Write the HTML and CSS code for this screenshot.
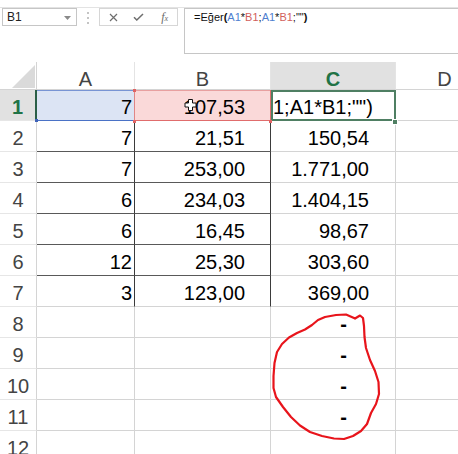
FILE: index.html
```html
<!DOCTYPE html>
<html lang="tr">
<head>
<meta charset="utf-8">
<title>Excel</title>
<link rel="stylesheet" href="styles.css">
</head>
<body>
<div class="app">
  <div class="toolbar">
    <div class="namebox">
      <span class="nb-text">B1</span>
      <svg class="nb-arrow" width="7" height="4" viewBox="0 0 7 4"><path d="M0 0H7L3.5 4Z" fill="#8a8a8a"/></svg>
    </div>
    <div class="dots"><i></i><i></i><i></i></div>
    <div class="btns">
      <span class="btn"><svg width="9" height="9" viewBox="0 0 9 9"><path d="M1 1L8 8M8 1L1 8" stroke="#6e6e6e" stroke-width="1.2" fill="none"/></svg></span>
      <span class="btn"><svg width="11" height="8" viewBox="0 0 11 8"><path d="M1 4.2L3.8 7L10 1" stroke="#6e6e6e" stroke-width="1.5" fill="none"/></svg></span>
      <span class="btn fx"><i>f</i><span class="fx-x">x</span></span>
    </div>
    <div class="fbox">=Eğer<b>(</b><span class="rb">A1</span>*<span class="rr">B1</span>;<span class="rb">A1</span>*<span class="rr">B1</span>;""<b>)</b></div>
  </div>

  <div class="sheet">
    <div class="cell corner"><span class="tri"></span></div>
    <div class="cell ch">A</div>
    <div class="cell ch">B</div>
    <div class="cell ch selh">C</div>
    <div class="cell ch">D</div>

    <div class="cell rh selh">1</div>
    <div class="cell na a1">7</div>
    <div class="cell nb b1">107,53</div>
    <div class="cell c1">1;A1*B1;"")</div>
    <div class="cell"></div>

    <div class="cell rh">2</div>
    <div class="cell na tb">7</div>
    <div class="cell nb tb">21,51</div>
    <div class="cell nc">150,54</div>
    <div class="cell"></div>

    <div class="cell rh">3</div>
    <div class="cell na tb">7</div>
    <div class="cell nb tb">253,00</div>
    <div class="cell nc">1.771,00</div>
    <div class="cell"></div>

    <div class="cell rh">4</div>
    <div class="cell na tb">6</div>
    <div class="cell nb tb">234,03</div>
    <div class="cell nc">1.404,15</div>
    <div class="cell"></div>

    <div class="cell rh">5</div>
    <div class="cell na tb">6</div>
    <div class="cell nb tb">16,45</div>
    <div class="cell nc">98,67</div>
    <div class="cell"></div>

    <div class="cell rh">6</div>
    <div class="cell na tb">12</div>
    <div class="cell nb tb">25,30</div>
    <div class="cell nc">303,60</div>
    <div class="cell"></div>

    <div class="cell rh">7</div>
    <div class="cell na tb last">3</div>
    <div class="cell nb tb last">123,00</div>
    <div class="cell nc">369,00</div>
    <div class="cell"></div>

    <div class="cell rh">8</div>
    <div class="cell"></div>
    <div class="cell"></div>
    <div class="cell dash">-</div>
    <div class="cell"></div>

    <div class="cell rh">9</div>
    <div class="cell"></div>
    <div class="cell"></div>
    <div class="cell dash">-</div>
    <div class="cell"></div>

    <div class="cell rh">10</div>
    <div class="cell"></div>
    <div class="cell"></div>
    <div class="cell dash">-</div>
    <div class="cell"></div>

    <div class="cell rh">11</div>
    <div class="cell"></div>
    <div class="cell"></div>
    <div class="cell dash">-</div>
    <div class="cell"></div>

    <div class="cell rh">12</div>
    <div class="cell"></div>
    <div class="cell"></div>
    <div class="cell"></div>
    <div class="cell"></div>
  </div>

  <svg class="overlay" width="458" height="454" viewBox="0 0 458 454">
    <rect x="35" y="119" width="3" height="3" fill="#3f63b8"/>
    <rect x="133" y="89" width="3" height="3" fill="#e06464"/>
    <rect x="133" y="120" width="3" height="3" fill="#e06464"/>
    <rect x="269" y="120" width="3" height="3" fill="#e06464"/>
    <rect x="392.5" y="119.5" width="5" height="5" fill="#4f7f63" stroke="#fff" stroke-width="1"/>
    <path d="M188.5 99.5H192.5V103H196V107H192.5V110.5H188.5V107H185V103H188.5Z" fill="#fff" stroke="#111" stroke-width="1"/>
    <polyline fill="none" stroke="#e8141b" stroke-width="2.2" stroke-linejoin="round" stroke-linecap="round"
      points="355,318.5 360,315.5 363,318 364,326 364.5,337 366,348 370,360 375,371 378.5,382 379,394 376,404 371,413 367,424 361,431 353,436 344,439 334,438.5 322,436 310,432 300,425.5 291,417 283,407 276,397 273.5,388 273.5,376 274.5,363 277,352 282,344 289,337.5 297,333 305,329.5 312,325 318,320 325,317 336,315 346,314.5 354,318"/>
  </svg>
</div>
</body>
</html>
```

FILE: styles.css
```css
html, body {
  margin: 0;
  padding: 0;
  background: #fff;
}

.app {
  position: relative;
  width: 458px;
  height: 454px;
  overflow: hidden;
  font-family: "Liberation Sans", Arial, sans-serif;
  color: #000;
}

/* ---------- formula toolbar ---------- */
.toolbar {
  display: flex;
  align-items: flex-start;
  box-sizing: border-box;
  height: 55px;
  margin-top: 7px;
  border-top: 1px solid #e3e3e3;
  padding-left: 2px;
}

.namebox {
  flex: 0 0 auto;
  box-sizing: border-box;
  width: 75px;
  height: 18px;
  border: 1px solid #c6c6c6;
  display: flex;
  align-items: center;
  justify-content: space-between;
  padding: 0 5px 0 4px;
  font-size: 12px;
  line-height: 16px;
  color: #222;
}

.nb-arrow {
  display: block;
  margin-top: 1px;
}

.dots {
  flex: 0 0 auto;
  display: flex;
  flex-direction: column;
  gap: 3px;
  width: 2px;
  margin: 4px 10px 0 10px;
}

.dots i {
  display: block;
  width: 2px;
  height: 2px;
  background: #c4c4c4;
}

.btns {
  flex: 0 0 auto;
  box-sizing: border-box;
  width: 79px;
  height: 18px;
  border: 1px solid #d6d6d6;
  display: flex;
  align-items: center;
  padding-left: 1px;
}

.btn {
  width: 26px;
  display: flex;
  justify-content: center;
  align-items: center;
}

.btn svg {
  display: block;
}

.fx {
  font-family: "Liberation Serif", "Times New Roman", serif;
  color: #6b6b6b;
  font-size: 12px;
  line-height: 14px;
  padding-left: 2px;
}

.fx-x {
  font-style: italic;
  font-size: 8px;
  margin-top: 4px;
}

.fbox {
  flex: 0 0 auto;
  box-sizing: border-box;
  width: 300px;
  height: 46px;
  margin-left: 6px;
  border: 1px solid #c6c6c6;
  padding: 2px 0 0 9px;
  font-size: 11px;
  line-height: 13px;
  color: #111;
  white-space: nowrap;
}

.fbox b {
  font-weight: bold;
}

.rb {
  color: #4f7fd0;
}

.rr {
  color: #d2605c;
}

/* ---------- sheet grid ---------- */
.sheet {
  display: grid;
  grid-template-columns: 37px 98px 136px 125px 98px;
  grid-template-rows: 28px repeat(12, 31px);
  width: 494px;
}

.cell {
  box-sizing: border-box;
  border-right: 1px solid #d4d4d4;
  border-bottom: 1px solid #d4d4d4;
  display: flex;
  align-items: flex-end;
  justify-content: flex-end;
  padding-bottom: 3px;
  font-size: 20px;
  line-height: 20px;
  white-space: nowrap;
}

.corner {
  padding: 0 1px 1px 0;
}

.tri {
  display: block;
  width: 23px;
  height: 23px;
  background: #dadada;
  clip-path: polygon(100% 0, 100% 100%, 0 100%);
}

.ch {
  justify-content: center;
  padding-bottom: 0;
  color: #444;
  border-right-color: #e4e4e4;
}

.rh {
  justify-content: center;
  color: #444;
  border-bottom-color: #e6e6e6;
}

.selh {
  background: #e1e1e1;
  color: #217346;
  font-weight: bold;
}

.rh.selh {
  border-right: 2px solid #2a5f47;
}

.na {
  padding-right: 2px;
}

.nb {
  padding-right: 25px;
}

.nc {
  padding-right: 26px;
}

.dash {
  padding-right: 48px;
  font-weight: bold;
}

.tb {
  border-right-color: #3b3b3b;
  border-bottom-color: #595959;
}

.tb.last {
  border-bottom-color: #d4d4d4;
}

.a1 {
  background: #dce4f4;
  border-right-color: #e08585;
  border-bottom-color: #4a72c6;
  box-shadow: inset 0 1px 0 #7894d4;
}

.b1 {
  background: #fad9d9;
  border-right-color: #e06c6c;
  border-bottom-color: #e06c6c;
  box-shadow: inset 0 1px 0 #e8a0a0;
}

.c1 {
  border: 2px solid #4f7f63;
  justify-content: flex-start;
  padding-bottom: 2px;
  overflow: hidden;
}

/* ---------- overlay (annotations on top of the sheet) ---------- */
.overlay {
  position: absolute;
  left: 0;
  top: 0;
  pointer-events: none;
}
```
